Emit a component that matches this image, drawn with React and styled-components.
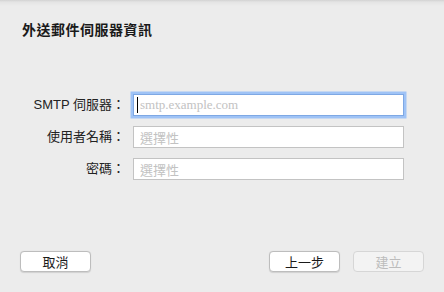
import React from "react";
import styled, { createGlobalStyle } from "styled-components";

const Global = createGlobalStyle`
  html, body { margin: 0; padding: 0; background: #ececec; }
  body { font-family: "Liberation Sans", "Noto Sans CJK TC", sans-serif; }
`;

const Sheet = styled.div`
  width: 444px;
  height: 292px;
  box-sizing: border-box;
  background: linear-gradient(#d2d2d2 0px, #e4e4e4 2px, #ececec 6px, #ececec 100%);
  display: flex;
  flex-direction: column;
  padding: 20px 20px 20px 20px;
`;

const Title = styled.h1`
  margin: 0 0 0 2px;
  font-family: "Liberation Sans", "Noto Sans CJK TC", sans-serif;
  font-size: 14px;
  line-height: 20px;
  font-weight: 700;
  color: #1a1a1a;
  letter-spacing: 0.5px;
`;

const Form = styled.div`
  margin-top: 54px;
  display: grid;
  grid-template-columns: 105px 271px;
  column-gap: 8px;
  row-gap: 10px;
  align-items: center;
`;

const Label = styled.label`
  text-align: right;
  font-size: 13px;
  line-height: 22px;
  color: #222;
  white-space: nowrap;
`;

const FieldWrap = styled.div`
  position: relative;
  height: 22px;
`;

const Field = styled.input`
  box-sizing: border-box;
  width: 100%;
  height: 22px;
  margin: 0;
  padding: 0 5px 0 6px;
  background: #fff;
  border: 1px solid ${(p) => (p.$focused ? "#7ea8e4" : "#c3c3c3")};
  border-radius: 0;
  outline: none;
  box-shadow: ${(p) => (p.$focused ? "0 0 0 2.5px #9fc3f6" : "none")};
  font-family: ${(p) =>
    p.$serif ? '"Liberation Serif", "Noto Sans CJK TC", serif' : '"Noto Sans CJK TC", sans-serif'};
  font-size: 13px;
  color: #222;
  &::placeholder {
    color: #c2c2c2;
  }
`;

const Caret = styled.span`
  position: absolute;
  left: 4px;
  top: 3px;
  width: 1px;
  height: 16px;
  background: #000;
`;

const Footer = styled.div`
  margin-top: auto;
  display: flex;
  align-items: center;
  gap: 13px;
`;

const Spacer = styled.div`
  flex: 1;
`;

const Button = styled.button`
  box-sizing: border-box;
  width: 71px;
  height: 21px;
  margin: 0;
  padding: 0;
  border-radius: 4px;
  border: 1px solid ${(p) => (p.disabled ? "#d6d6d6" : "#bdbdbd")};
  background: ${(p) => (p.disabled ? "#f3f3f3" : "#ffffff")};
  box-shadow: ${(p) => (p.disabled ? "none" : "0 0.5px 1px rgba(0,0,0,0.12)")};
  font-family: "Noto Sans CJK TC", sans-serif;
  font-size: 13px;
  line-height: 19px;
  color: ${(p) => (p.disabled ? "#bcbcbc" : "#1a1a1a")};
`;

export default function App() {
  return (
    <>
      <Global />
      <Sheet>
        <Title>外送郵件伺服器資訊</Title>
        <Form>
          <Label>SMTP 伺服器：</Label>
          <FieldWrap>
            <Field $focused $serif placeholder="smtp.example.com" readOnly />
            <Caret />
          </FieldWrap>
          <Label>使用者名稱：</Label>
          <FieldWrap>
            <Field placeholder="選擇性" readOnly />
          </FieldWrap>
          <Label>密碼：</Label>
          <FieldWrap>
            <Field type="password" placeholder="選擇性" readOnly />
          </FieldWrap>
        </Form>
        <Footer>
          <Button>取消</Button>
          <Spacer />
          <Button>上一步</Button>
          <Button disabled>建立</Button>
        </Footer>
      </Sheet>
    </>
  );
}
